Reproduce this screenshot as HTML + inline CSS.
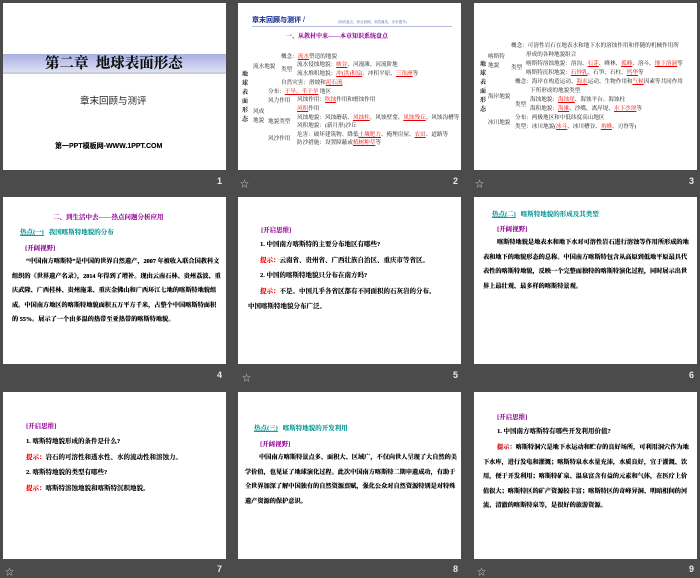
<!DOCTYPE html>
<html><head><meta charset="utf-8"><style>
*{margin:0;padding:0;box-sizing:border-box}
body{width:700px;height:576px;background:#4b4b4b;position:relative;overflow:hidden;font-family:"Liberation Serif","Noto Serif CJK SC",serif}
.s{position:absolute;width:223px;height:167px;background:#fff;overflow:hidden}
.n{position:absolute;color:#e8e8e8;font:bold 9px "Liberation Sans",sans-serif}
.st{position:absolute;color:#ccc;font-size:9px}
.a{position:absolute;white-space:nowrap;font-size:5.6px;color:#111;line-height:1}
.r{color:#e00;text-decoration:underline}
.p{position:absolute;white-space:nowrap;font-weight:bold;line-height:1;text-shadow:0 0 0.3px currentColor}
.mg{color:#9b1aa0}.tl{color:#1a9a9a}.rd{color:#f00}
.body{position:absolute;font-family:"Liberation Serif","Noto Serif CJK SC",serif;font-weight:bold;font-size:6.2px;color:#000;line-height:14.5px;text-shadow:0 0 0.4px #000}
</style></head><body>

<!-- slide 1 -->
<div class="s" style="left:3px;top:3px">
 <div style="position:absolute;left:0;top:51px;width:223px;height:20px;background:linear-gradient(#a9aee0,#c4c8ec 50%,#dfe1f3);border-bottom:2px solid #c5d0d8"></div>
 <div class="p" style="left:42px;top:54px;font-size:14.5px;color:#111;font-family:'Liberation Serif','Noto Serif CJK SC',serif">第二章&nbsp; 地球表面形态</div>
 <div class="p" style="left:77px;top:94px;font-size:9.5px;color:#222;font-weight:normal;text-shadow:none;font-family:'Liberation Sans','Noto Sans CJK SC',sans-serif">章末回顾与测评</div>
 <div class="p" style="left:52px;top:140px;font-size:7px;color:#111;font-family:'Liberation Sans','Noto Sans CJK SC',sans-serif">第一PPT模板网-WWW.1PPT.COM</div>
</div>
<div class="n" style="left:217px;top:176px">1</div>

<!-- slide 2 -->
<div class="s" style="left:238px;top:3px">
 <div class="p" style="left:14px;top:14px;font-size:7px;color:#2a3f9a;font-family:'Liberation Sans','Noto Sans CJK SC',sans-serif">章末回顾与测评 <span style="font-weight:normal">/</span></div>
 <div style="position:absolute;left:14px;top:23px;width:200px;height:1px;background:#b8bce0"></div>
 <div class="a" style="left:100px;top:18px;font-size:3.5px;color:#5060a0">(知识盘点，综合回顾，高效落实，步步提升)</div>
 <div class="p mg" style="left:48px;top:31px;font-size:6px">一、从教材中来——本章知识系统盘点</div>
 <div class="a" style="left:4px;top:68px;font-size:6px;font-weight:bold;width:6px;white-space:normal;line-height:9px">地球表面形态</div>
 <div class="a" style="left:15px;top:62px">流水地貌</div>
 <div class="a" style="left:43px;top:52px">概念：<span class="r">流水</span>塑造的地貌</div>
 <div class="a" style="left:43px;top:65px">类型</div>
 <div class="a" style="left:59px;top:60px">流水侵蚀地貌：<span class="r">峡谷</span>、河漫滩、河流阶地</div>
 <div class="a" style="left:59px;top:69px">流水堆积地貌：<span class="r">冲(洪)积扇</span>、冲积平原、<span class="r">三角洲</span>等</div>
 <div class="a" style="left:43px;top:78px">自然灾害：滑坡和<span class="r">泥石流</span></div>
 <div class="a" style="left:30px;top:87px">分布：<span class="r">干旱、半干旱</span> 地区</div>
 <div class="a" style="left:30px;top:96px">风力作用</div>
 <div class="a" style="left:59px;top:95px">风蚀作用：<span class="r">吹蚀</span>作用和磨蚀作用</div>
 <div class="a" style="left:59px;top:104px"><span class="r">风积</span>作用</div>
 <div class="a" style="left:15px;top:105px;width:12px;white-space:normal;line-height:9px">风成地貌</div>
 <div class="a" style="left:30px;top:117px">地貌类型</div>
 <div class="a" style="left:59px;top:113px">风蚀地貌：风蚀蘑菇、<span class="r">风蚀柱</span>、风蚀壁龛、<span class="r">风蚀残丘</span>、风蚀沟槽等</div>
 <div class="a" style="left:59px;top:121px">风积地貌：(新月形)沙丘</div>
 <div class="a" style="left:30px;top:134px">风沙作用</div>
 <div class="a" style="left:59px;top:130px">危害：破坏建筑物、降低<span class="r">土壤肥力</span>、掩埋房屋、<span class="r">农田</span>、道路等</div>
 <div class="a" style="left:59px;top:138px">防沙措施：设置障蔽或<span class="r">植树种草</span>等</div>
</div>
<div class="st" style="left:240px;top:177px">☆</div>
<div class="n" style="left:453px;top:176px">2</div>

<!-- slide 3 -->
<div class="s" style="left:474px;top:3px">
 <div class="a" style="left:6px;top:58px;font-size:6px;font-weight:bold;width:6px;white-space:normal;line-height:9px">地球表面形态</div>
 <div class="a" style="left:14px;top:50px;width:20px;white-space:normal;line-height:9px">喀斯特地貌</div>
 <div class="a" style="left:37px;top:41px">概念：可溶性岩石在地表水和地下水的溶蚀作用和伴随的机械作用所</div>
 <div class="a" style="left:52px;top:50px">形成的各种地貌组合</div>
 <div class="a" style="left:37px;top:63px">类型</div>
 <div class="a" style="left:52px;top:59px">喀斯特溶蚀地貌：溶沟、<span class="r">石芽</span>、峰林、<span class="r">孤峰</span>、溶斗、<span class="r">地下溶洞</span>等</div>
 <div class="a" style="left:52px;top:68px">喀斯特沉积地貌：<span class="r">石钟乳</span>、石笋、石柱、<span class="r">钙华</span>等</div>
 <div class="a" style="left:14px;top:92px">海岸地貌</div>
 <div class="a" style="left:41px;top:77px">概念：海岸在构造运动、<span class="r">海水</span>运动、生物作用和<span class="r">气候</span>因素等共同作用</div>
 <div class="a" style="left:56px;top:86px">下所形成的地貌类型</div>
 <div class="a" style="left:41px;top:100px">类型</div>
 <div class="a" style="left:56px;top:95px">海蚀地貌：<span class="r">海蚀崖</span>、海蚀平台、海蚀柱</div>
 <div class="a" style="left:56px;top:104px">海积地貌：<span class="r">海滩</span>、沙嘴、离岸堤、<span class="r">水下沙坝</span>等</div>
 <div class="a" style="left:14px;top:118px">冰川地貌</div>
 <div class="a" style="left:41px;top:113px">分布：两极地区和中低纬度高山地区</div>
 <div class="a" style="left:41px;top:122px">类型：冰川地貌(<span class="r">冰斗</span>、冰川槽谷、<span class="r">角峰</span>、刃脊等)</div>
</div>
<div class="st" style="left:475px;top:177px">☆</div>
<div class="n" style="left:689px;top:176px">3</div>

<!-- slide 4 -->
<div class="s" style="left:3px;top:197px">
 <div class="p mg" style="left:50px;top:18px;font-size:6.5px">二、到生活中去——热点问题分析应用</div>
 <div class="p tl" style="left:17px;top:33px;font-size:6.5px"><u>热点(一)</u>&nbsp;&nbsp; 我国喀斯特地貌的分布</div>
 <div class="p mg" style="left:22px;top:49px;font-size:6.5px">[开阔视野]</div>
 <div class="body" style="left:9px;top:58px;width:210px;text-indent:14px">“中国南方喀斯特”是中国的世界自然遗产，2007 年被收入联合国教科文组织的《世界遗产名录》，2014 年得到了增补。现由云南石林、贵州荔波、重庆武隆、广西桂林、贵州施秉、重庆金佛山和广西环江七地的喀斯特地貌组成。中国南方地区的喀斯特地貌面积五万平方千米，占整个中国喀斯特面积的 55%。展示了一个由多温的热带至亚热带的喀斯特地貌。</div>
</div>
<div class="n" style="left:217px;top:370px">4</div>

<!-- slide 5 -->
<div class="s" style="left:238px;top:197px">
 <div class="p mg" style="left:23px;top:31px;font-size:6.5px">[开启思维]</div>
 <div class="p" style="left:22px;top:45px;font-size:6.5px;color:#111">1. 中国南方喀斯特的主要分布地区有哪些?</div>
 <div class="p" style="left:22px;top:61px;font-size:6.5px;color:#111"><span class="rd">提示：</span>云南省、贵州省、广西壮族自治区、重庆市等省区。</div>
 <div class="p" style="left:22px;top:76px;font-size:6.5px;color:#111">2. 中国的喀斯特地貌只分布在南方吗?</div>
 <div class="p" style="left:22px;top:92px;font-size:6.5px;color:#111"><span class="rd">提示：</span>不是。中国几乎各省区都有不同面积的石灰岩的分布。</div>
 <div class="p" style="left:10px;top:107px;font-size:6.5px;color:#111">中国喀斯特地貌分布广泛。</div>
</div>
<div class="st" style="left:242px;top:371px">☆</div>
<div class="n" style="left:453px;top:370px">5</div>

<!-- slide 6 -->
<div class="s" style="left:474px;top:197px">
 <div class="p tl" style="left:18px;top:15px;font-size:6.5px"><u>热点(二)</u>&nbsp;&nbsp; 喀斯特地貌的形成及其类型</div>
 <div class="p mg" style="left:23px;top:30px;font-size:6.5px">[开阔视野]</div>
 <div class="body" style="left:9px;top:39px;width:210px;text-indent:14px">喀斯特地貌是地表水和地下水对可溶性岩石进行溶蚀等作用所形成的地表和地下的地貌形态的总称。中国南方喀斯特包含从高原到低地平原最具代表性的喀斯特地貌，反映一个完整而独特的喀斯特演化过程，同时展示出世界上最壮观、最多样的喀斯特景观。</div>
</div>
<div class="n" style="left:689px;top:370px">6</div>

<!-- slide 7 -->
<div class="s" style="left:3px;top:392px">
 <div class="p mg" style="left:23px;top:32px;font-size:6.5px">[开启思维]</div>
 <div class="p" style="left:23px;top:47px;font-size:6.5px;color:#111">1. 喀斯特地貌形成的条件是什么?</div>
 <div class="p" style="left:23px;top:63px;font-size:6.5px;color:#111"><span class="rd">提示：</span>岩石的可溶性和透水性、水的流动性和溶蚀力。</div>
 <div class="p" style="left:23px;top:78px;font-size:6.5px;color:#111">2. 喀斯特地貌的类型有哪些?</div>
 <div class="p" style="left:23px;top:94px;font-size:6.5px;color:#111"><span class="rd">提示：</span>喀斯特溶蚀地貌和喀斯特沉积地貌。</div>
</div>
<div class="st" style="left:5px;top:565px">☆</div>
<div class="n" style="left:217px;top:564px">7</div>

<!-- slide 8 -->
<div class="s" style="left:238px;top:392px">
 <div class="p tl" style="left:16px;top:34px;font-size:6.5px"><u>热点(三)</u>&nbsp;&nbsp; 喀斯特地貌的开发利用</div>
 <div class="p mg" style="left:22px;top:50px;font-size:6.5px">[开阔视野]</div>
 <div class="body" style="left:7px;top:59px;width:212px;text-indent:14px">中国南方喀斯特景点多、面积大、区域广，不仅向世人呈现了大自然的美学价值，也见证了地球演化过程。此次中国南方喀斯特二期申遗成功，有助于全世界加深了解中国独有的自然资源禀赋，强化公众对自然资源特别是对特殊遗产资源的保护意识。</div>
</div>
<div class="n" style="left:453px;top:564px">8</div>

<!-- slide 9 -->
<div class="s" style="left:474px;top:392px">
 <div class="p mg" style="left:23px;top:23px;font-size:6.5px">[开启思维]</div>
 <div class="p" style="left:23px;top:37px;font-size:6.5px;color:#111">1. 中国南方喀斯特有哪些开发利用价值?</div>
 <div class="body" style="left:9px;top:49px;width:210px;text-indent:14px"><span class="rd">提示：</span>喀斯特洞穴是地下水运动和贮存的良好场所，可利用洞穴作为地下水库，进行发电和灌溉；喀斯特泉水水量充沛，水质良好，宜于灌溉、饮用，便于开发利用；喀斯特矿泉、温泉富含有益的元素和气体，在医疗上价值很大；喀斯特区的矿产资源较丰富；喀斯特区的奇峰异洞、明暗相间的河流、清澈的喀斯特泉等，是很好的旅游资源。</div>
</div>
<div class="st" style="left:477px;top:565px">☆</div>
<div class="n" style="left:689px;top:564px">9</div>
</body></html>
